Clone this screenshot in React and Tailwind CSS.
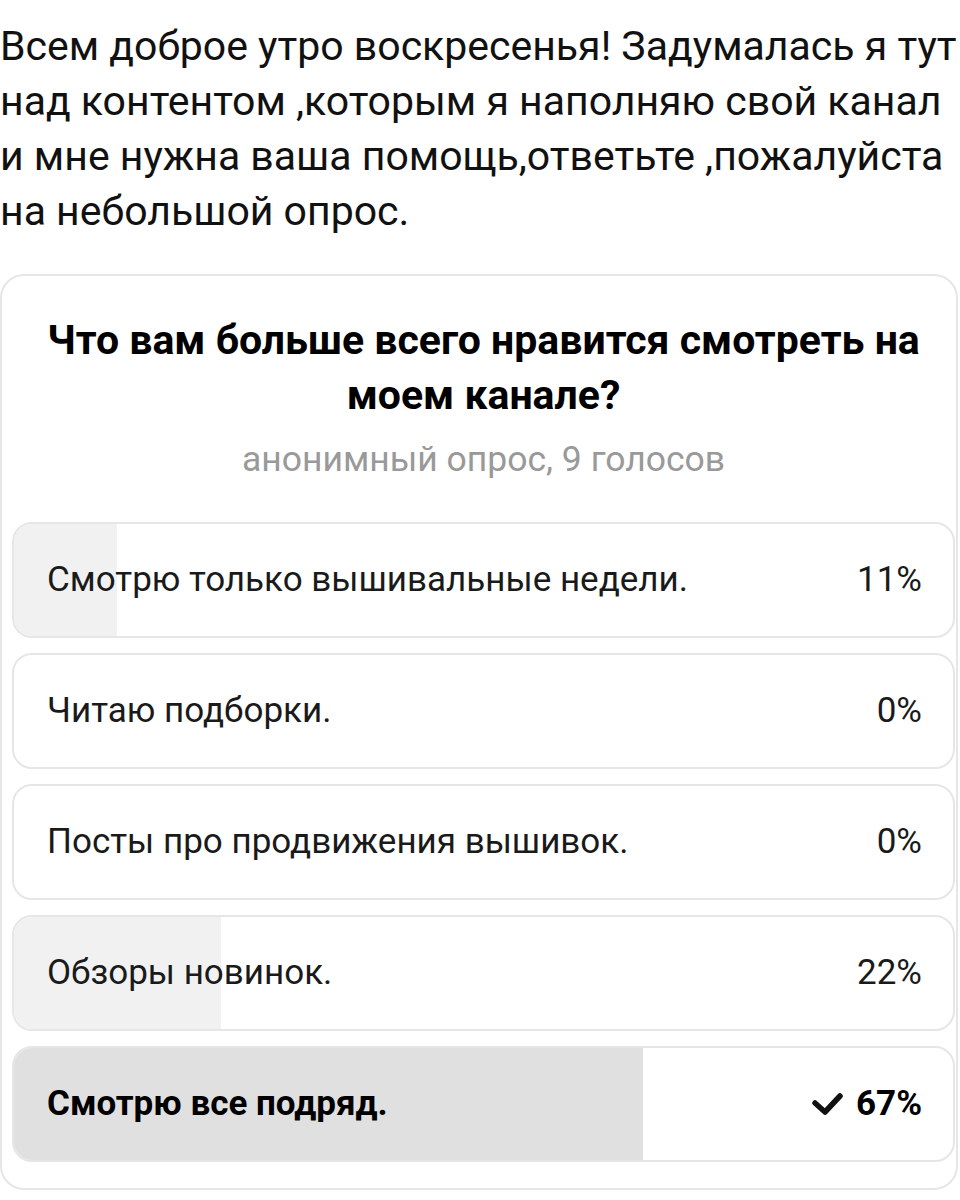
const options = [
  { text: "Смотрю только вышивальные недели.", pct: 11 },
  { text: "Читаю подборки.", pct: 0 },
  { text: "Посты про продвижения вышивок.", pct: 0 },
  { text: "Обзоры новинок.", pct: 22 },
  { text: "Смотрю все подряд.", pct: 67, chosen: true },
]

const Check = () => (
  <svg width="31" height="24" viewBox="0 0 31 24" fill="none" className="mr-[13px]">
    <polyline points="3,11 13,20 28,4" stroke="#111" strokeWidth="5.5" strokeLinecap="round" strokeLinejoin="round" />
  </svg>
)

const Option = ({ text, pct, chosen }) => (
  <div className="relative h-[116px] rounded-[20px] border-2 border-[#e6e6e6] overflow-hidden bg-white">
    <div
      className={`absolute inset-y-0 left-0 ${chosen ? "bg-[#e0e0e0]" : "bg-[#f1f1f1]"}`}
      style={{ width: `${pct}%` }}
    />
    <div className="relative h-full flex items-center justify-between pl-[33px] pr-[31px] text-[35px] text-[#1a1a1a]">
      <span className={chosen ? "font-bold text-black" : ""}>{text}</span>
      <span className={`flex items-center ${chosen ? "font-bold text-black" : ""}`}>
        {chosen && <Check />}
        {pct}%
      </span>
    </div>
  </div>
)

export default function App() {
  return (
    <div className="w-[960px] min-h-[1200px] bg-white overflow-hidden" style={{ fontFamily: "Roboto, 'Noto Sans', sans-serif" }}>
      <p className="pt-[19px] text-[41px] leading-[55px] text-[#111]">
        Всем доброе утро воскресенья! Задумалась я тут над контентом ,которым я наполняю свой канал и мне нужна ваша помощь,ответьте ,пожалуйста на небольшой опрос.
      </p>
      <div className="mt-[35px] w-[958px] rounded-[24px] border-2 border-[#e6e6e6] pl-[10px] pr-[1px] pt-[37px] pb-[26px]">
        <h1 className="text-center text-[41px] leading-[55px] font-bold text-black">
          Что вам больше всего нравится смотреть на моем канале?
        </h1>
        <p className="mt-[13px] text-center text-[35.5px] leading-[46px] text-[#999]">
          анонимный опрос, 9 голосов
        </p>
        <div className="mt-[40px] flex flex-col gap-[15px]">
          {options.map((o) => (
            <Option key={o.text} {...o} />
          ))}
        </div>
      </div>
    </div>
  )
}
